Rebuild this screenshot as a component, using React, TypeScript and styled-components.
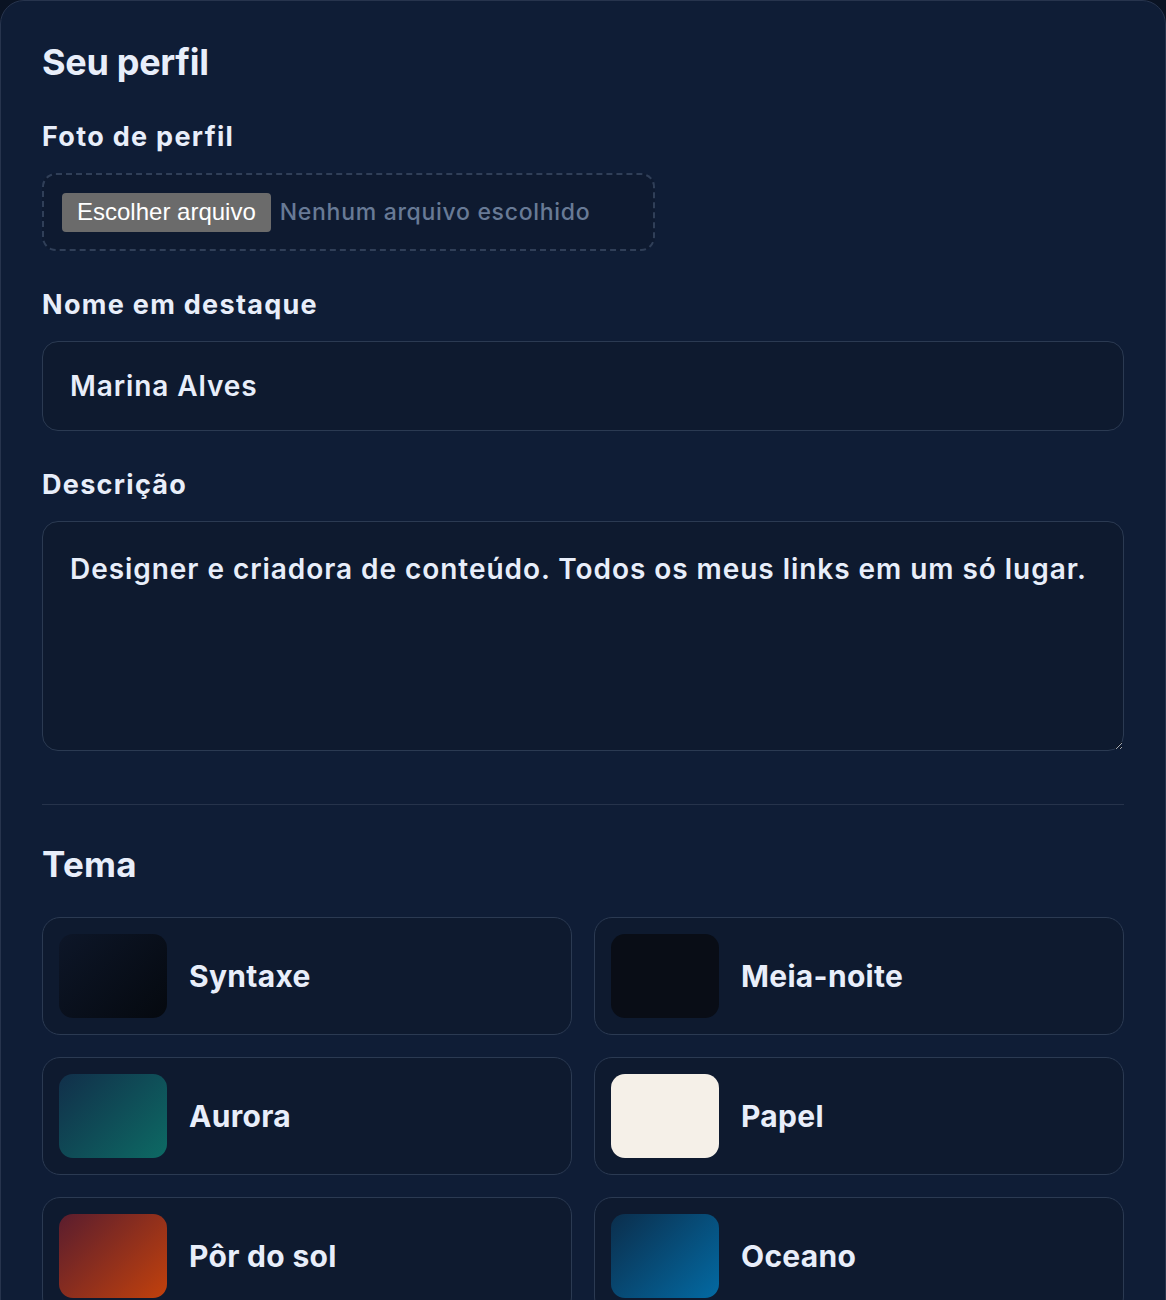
import styled, { createGlobalStyle } from "styled-components";

const GlobalStyle = createGlobalStyle`
  body {
    margin: 0;
    background-color: #0a1323;
    font-family: Inter, "Noto Sans", sans-serif;
    color: #e8eefa;
  }
`;

const Panel = styled.section`
  box-sizing: border-box;
  width: 1166px;
  min-height: 1360px;
  padding: 40px 41px;
  background-color: #0f1d36;
  border: 1px solid #27344d;
  border-radius: 24px;
  display: flex;
  flex-direction: column;
`;

const Title = styled.h1<{ $size?: number; $spacing?: number }>`
  margin: 0;
  font-size: ${(props) => props.$size ?? 36}px;
  line-height: 42px;
  font-weight: 700;
  letter-spacing: ${(props) => props.$spacing ?? -0.3}px;
  color: #e8eefa;
`;

const Field = styled.div`
  display: flex;
  flex-direction: column;
  gap: 21px;
  margin-top: 38px;
`;

const Label = styled.label`
  font-size: 27px;
  line-height: 31px;
  font-weight: 650;
  letter-spacing: 1.3px;
  color: #e8eefa;
`;

const FileBox = styled.label`
  box-sizing: border-box;
  width: 613px;
  height: 78px;
  padding: 0 18px;
  border: 2px dashed #303f58;
  border-radius: 14px;
  background-color: #0e1a30;
  display: flex;
  align-items: center;
  gap: 9px;
  cursor: pointer;

  input {
    display: none;
  }
`;

const FileButton = styled.span`
  box-sizing: border-box;
  height: 39px;
  padding: 0 15px;
  display: flex;
  align-items: center;
  background-color: #6b6b6b;
  border-radius: 4px;
  font-family: "Liberation Sans", Arial, sans-serif;
  font-size: 24px;
  color: #ffffff;
`;

const FileText = styled.span`
  font-size: 23px;
  font-weight: 500;
  letter-spacing: 0.7px;
  color: #687a96;
`;

const TextInput = styled.input`
  box-sizing: border-box;
  width: 100%;
  height: 90px;
  padding: 0 27px;
  background-color: #0e1a2f;
  border: 1px solid #2b3a52;
  border-radius: 16px;
  font-family: Inter, "Noto Sans", sans-serif;
  font-size: 28px;
  font-weight: 600;
  letter-spacing: 0.9px;
  color: #e8eefa;
  outline: none;
`;

const TextArea = styled.textarea`
  box-sizing: border-box;
  width: 100%;
  height: 230px;
  padding: 26px 27px 24px;
  background-color: #0e1a2f;
  border: 1px solid #2b3a52;
  border-radius: 16px;
  font-family: Inter, "Noto Sans", sans-serif;
  font-size: 28px;
  line-height: 1.5;
  font-weight: 600;
  letter-spacing: 0.95px;
  color: #e8eefa;
  outline: none;
  resize: vertical;
  color-scheme: dark;
`;

const Divider = styled.hr`
  margin: 53px 0 38px;
  border: none;
  border-top: 1px solid #26334b;
`;

const ThemeGrid = styled.div`
  margin-top: 32px;
  display: grid;
  grid-template-columns: 1fr 1fr;
  gap: 22px;
`;

const ThemeCard = styled.button`
  box-sizing: border-box;
  height: 118px;
  padding: 16px;
  display: flex;
  align-items: center;
  gap: 22px;
  background-color: #0e1a2f;
  border: 1px solid #2b3a52;
  border-radius: 18px;
  cursor: pointer;
  text-align: left;
`;

const Swatch = styled.span<{ $bg: string }>`
  flex-shrink: 0;
  width: 108px;
  height: 84px;
  border-radius: 14px;
  background: ${(props) => props.$bg};
`;

const ThemeName = styled.span`
  font-family: Inter, "Noto Sans", sans-serif;
  font-size: 30px;
  font-weight: 650;
  letter-spacing: 0.3px;
  color: #e8eefa;
`;

const themes = [
  { name: "Syntaxe", bg: "linear-gradient(135deg, #0d1628, #05090f)" },
  { name: "Meia-noite", bg: "#090d16" },
  { name: "Aurora", bg: "linear-gradient(135deg, #112f4a, #0d6a64)" },
  { name: "Papel", bg: "#f5f0e8" },
  { name: "Pôr do sol", bg: "linear-gradient(135deg, #5a1d2e, #c2410c)" },
  { name: "Oceano", bg: "linear-gradient(135deg, #0b2e4c, #036aa3)" },
];

const App = () => {
  return (
    <>
      <GlobalStyle />
      <Panel>
        <Title>Seu perfil</Title>
        <Field>
          <Label>Foto de perfil</Label>
          <FileBox>
            <input type="file" accept="image/*" />
            <FileButton>Escolher arquivo</FileButton>
            <FileText>Nenhum arquivo escolhido</FileText>
          </FileBox>
        </Field>
        <Field>
          <Label htmlFor="display-name">Nome em destaque</Label>
          <TextInput id="display-name" type="text" defaultValue="Marina Alves" />
        </Field>
        <Field>
          <Label htmlFor="bio">Descrição</Label>
          <TextArea
            id="bio"
            defaultValue="Designer e criadora de conteúdo. Todos os meus links em um só lugar."
          />
        </Field>
        <Divider />
        <Title $size={35} $spacing={0.3}>
          Tema
        </Title>
        <ThemeGrid>
          {themes.map((theme) => (
            <ThemeCard key={theme.name} type="button">
              <Swatch $bg={theme.bg} />
              <ThemeName>{theme.name}</ThemeName>
            </ThemeCard>
          ))}
        </ThemeGrid>
      </Panel>
    </>
  );
};

export default App;
